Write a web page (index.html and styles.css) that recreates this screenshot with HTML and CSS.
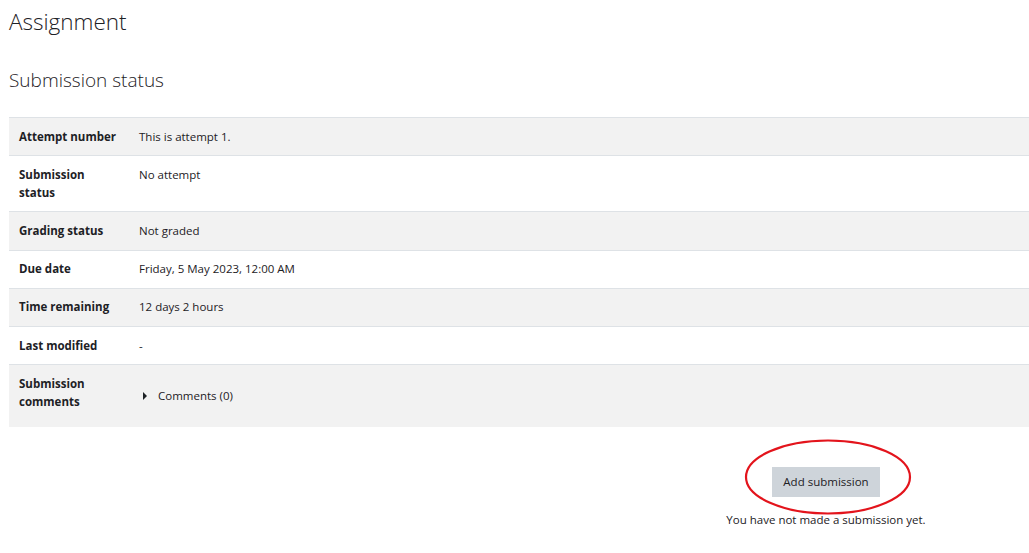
FILE: index.html
```html
<!DOCTYPE html>
<html lang="en">
<head>
<meta charset="utf-8">
<title>Assignment</title>
<link rel="stylesheet" href="styles.css">
</head>
<body>
<main class="page">
  <h2 class="page-title">Assignment</h2>
  <h3 class="section-title">Submission status</h3>
  <table class="status-table">
    <tbody>
      <tr class="odd"><th>Attempt number</th><td>This is attempt 1.</td></tr>
      <tr><th>Submission status</th><td>No attempt</td></tr>
      <tr class="odd"><th>Grading status</th><td>Not graded</td></tr>
      <tr><th>Due date</th><td>Friday, 5 May 2023, 12:00 AM</td></tr>
      <tr class="odd"><th>Time remaining</th><td>12 days 2 hours</td></tr>
      <tr><th>Last modified</th><td>-</td></tr>
      <tr class="odd tall"><th>Submission comments</th><td><span class="comments"><span class="caret"></span>Comments (0)</span></td></tr>
    </tbody>
  </table>
  <div class="actions">
    <div class="action-box">
      <button class="btn" type="button">Add submission</button>
      <svg class="circle" width="170" height="80" viewBox="0 0 170 80"><ellipse cx="84" cy="39" rx="82" ry="36.5" fill="none" stroke="#e3141c" stroke-width="2.2"/></svg>
      <p class="note">You have not made a submission yet.</p>
    </div>
  </div>
</main>
</body>
</html>
```
FILE: styles.css
```css
html, body {
  margin: 0;
  padding: 0;
  background: #fff;
}
body {
  font-family: "Open Sans", "Noto Sans", sans-serif;
  color: #1d2125;
  font-size: 11.5px;
  line-height: 18px;
}
.page {
  padding: 7px 0 0 9px;
}
.page-title {
  margin: 0 0 31px 0;
  font-size: 22.5px;
  line-height: 30px;
  font-weight: 300;
}
.section-title {
  margin: 0 0 24px 0;
  font-size: 19px;
  line-height: 25px;
  font-weight: 300;
}
.status-table {
  width: 100%;
  border-collapse: collapse;
}
.status-table th,
.status-table td {
  border-top: 1px solid #dee2e6;
  padding: 9.6px 10px;
  text-align: left;
  vertical-align: top;
  font-size: 11.5px;
  line-height: 18px;
}
.status-table th {
  width: 100px;
  font-weight: 700;
}
.status-table td {
  font-weight: 400;
}
.status-table tr.odd {
  background: #f2f2f2;
}
.status-table tr.tall th {
  padding-bottom: 16px;
}
.status-table tr.tall td {
  vertical-align: middle;
}
.comments {
  display: inline-flex;
  align-items: center;
  gap: 11px;
  padding-left: 4px;
}
.caret {
  width: 0;
  height: 0;
  border-top: 4px solid transparent;
  border-bottom: 4px solid transparent;
  border-left: 4.5px solid #1d2125;
}
.actions {
  display: flex;
  padding-top: 40px;
}
.action-box {
  position: relative;
  margin-left: 697px;
  width: 240px;
  display: flex;
  flex-direction: column;
  align-items: center;
}
.btn {
  font-family: inherit;
  font-size: 11.5px;
  line-height: 18px;
  color: #1d2125;
  background: #ced4da;
  border: 1px solid #ced4da;
  border-radius: 0;
  padding: 5px 10px;
}
.circle {
  position: absolute;
  left: 38px;
  top: -29px;
}
.note {
  margin: 14px 0 0 0;
  font-size: 11.5px;
  line-height: 18px;
}
```
